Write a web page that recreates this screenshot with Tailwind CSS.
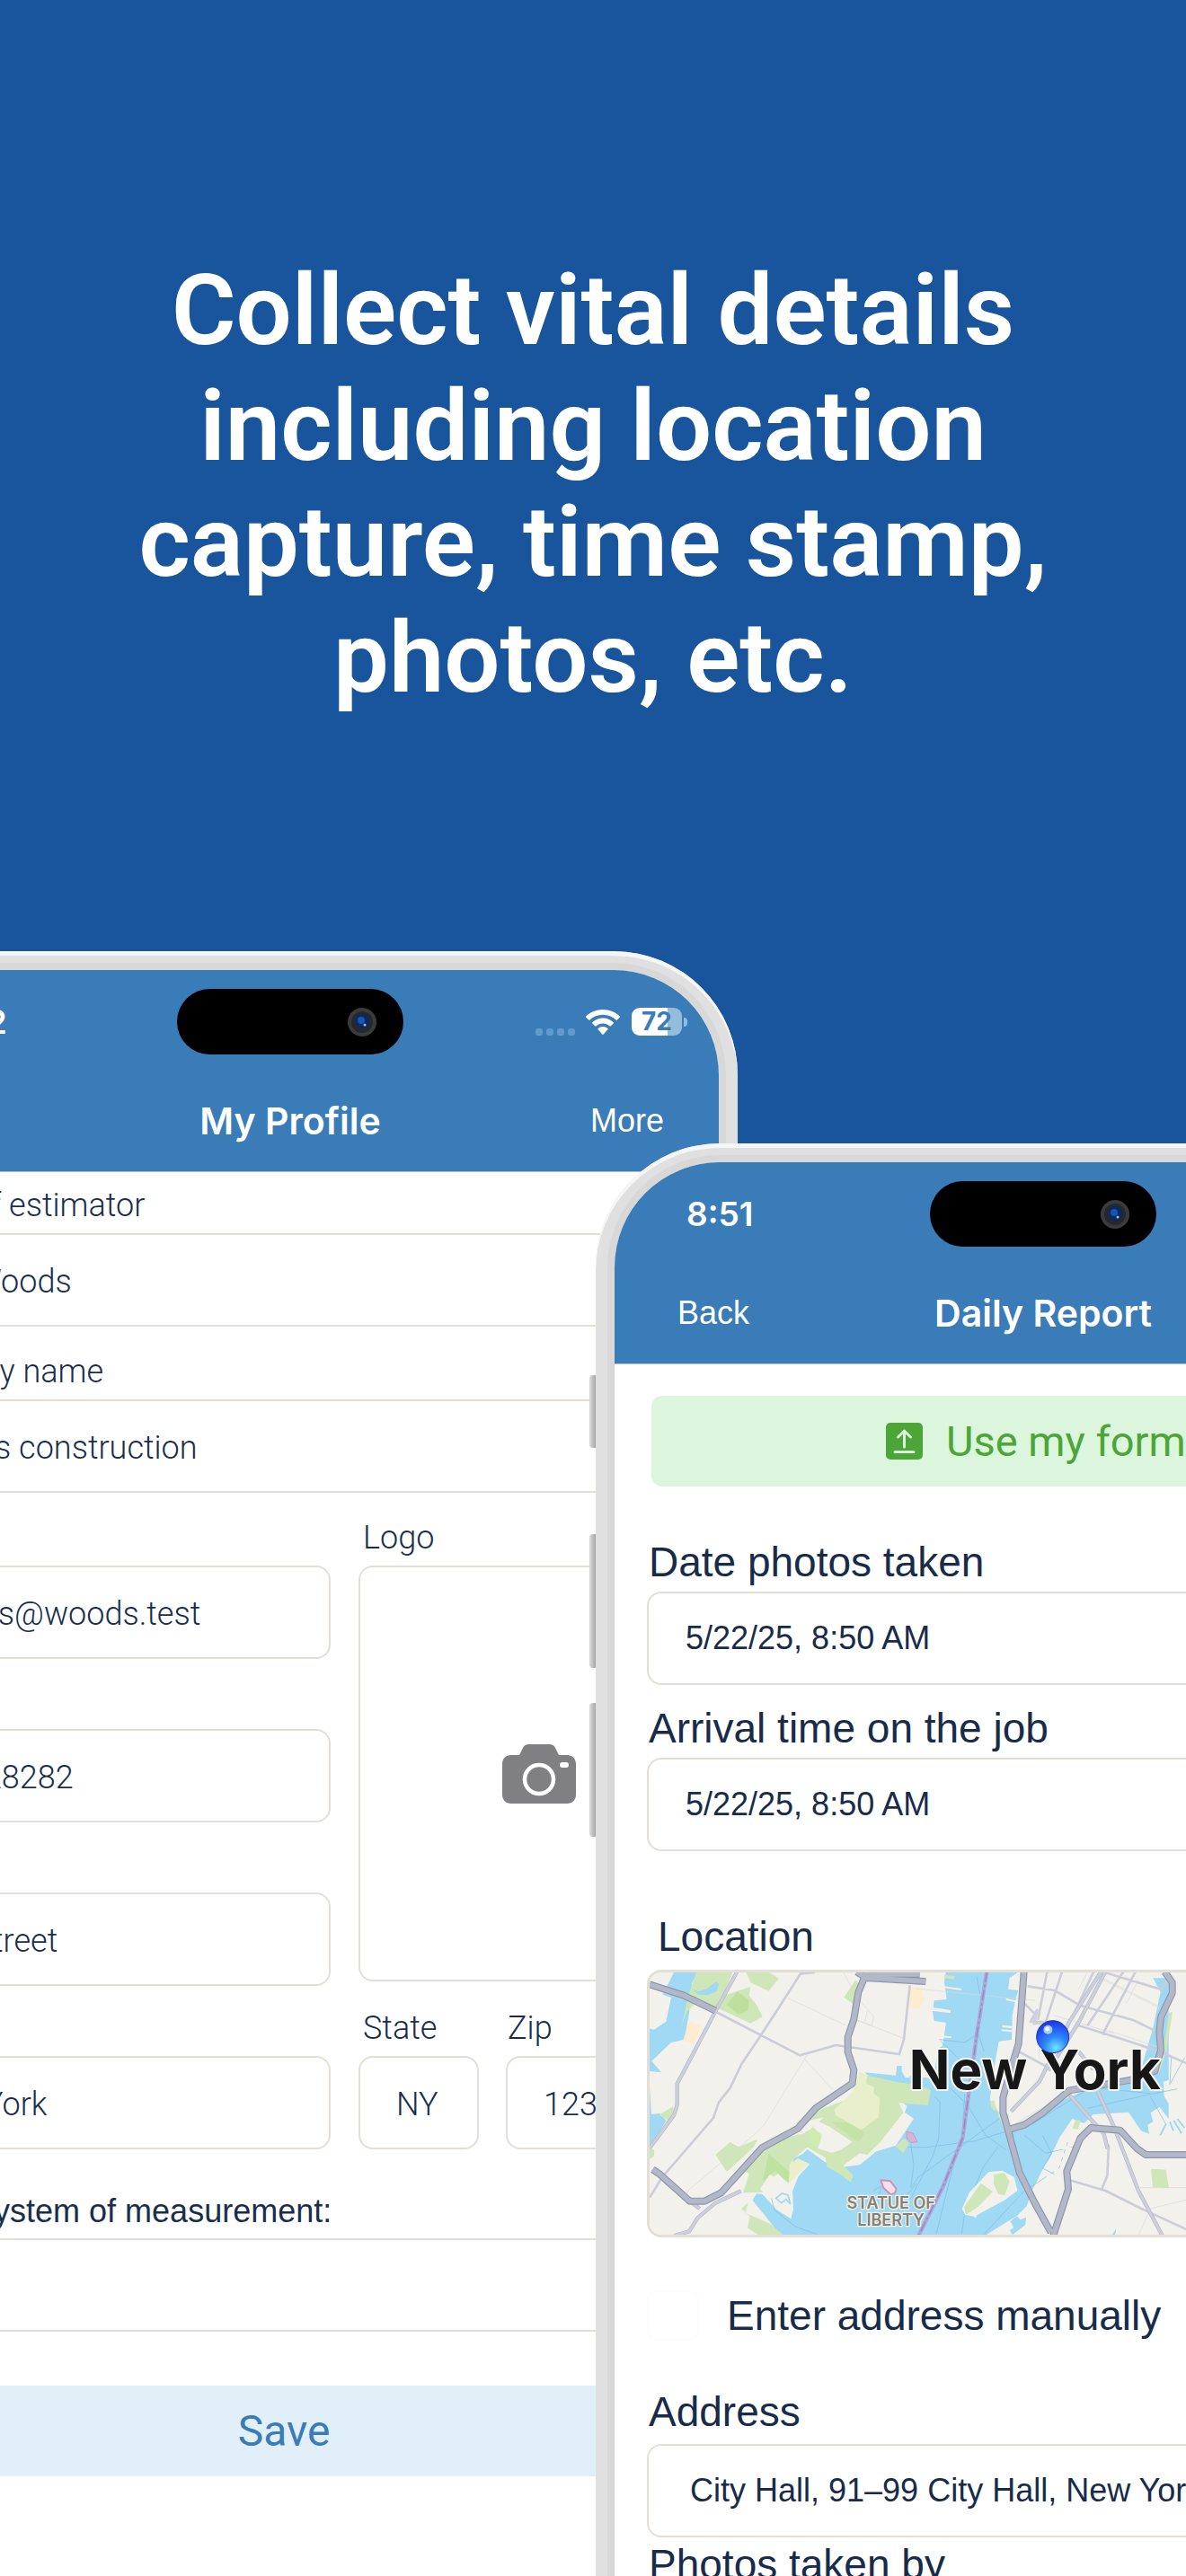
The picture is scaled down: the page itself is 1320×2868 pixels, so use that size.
<!DOCTYPE html>
<html lang="en">
  <head>
    <meta charset="UTF-8" />
    <meta name="viewport" content="width=device-width, initial-scale=1.0" />
    <title>Collect vital details</title>
    <script src="https://cdn.jsdelivr.net/npm/@tailwindcss/browser@4"></script>
  </head>
  <body class="bg-[#19559d]">
    <main class="h-screen overflow-hidden flex flex-col">
      <header class="px-[110px] pt-[281px] pb-[262px]">
        <h1
          class="font-['Roboto',sans-serif] font-semibold text-[110px] leading-[129px] text-center text-white"
        >
          Collect vital details including location capture, time stamp, photos, etc.
        </h1>
      </header>

      <div class="grid grid-cols-[minmax(0,1fr)] items-start">
        <!-- My Profile phone -->
        <section
          class="col-start-1 row-start-1 -ml-[175px] mr-[499px] rounded-[138px] bg-[#e0e0e0] p-[13px] shadow-[inset_0_5px_0_#f6f6f6]"
        >
          <div class="rounded-[125px] bg-[#d8d8d8] p-2">
            <div class="h-[2060px] rounded-[117px] overflow-hidden bg-white">
              <div class="bg-[#3a7cb8] text-white pt-[21px] border-b border-[#b9bfc6]">
                <div class="grid grid-cols-[1fr_252px_1fr] items-center">
                  <span class="pl-20 font-['Inter',sans-serif] font-semibold text-[37px] leading-[44px]">8:52</span>
                  <div class="h-[73px] rounded-full bg-black flex items-center justify-end pr-[30px]">
                    <svg class="w-8 h-8" viewBox="0 0 32 32" aria-hidden="true">
                      <circle cx="16" cy="16" r="16" fill="#3b3b3d" />
                      <circle cx="16" cy="16" r="12" fill="#27282b" />
                      <circle cx="16" cy="15" r="8" fill="#0a2a63" />
                      <circle cx="15" cy="14" r="4" fill="#1556ae" />
                      <circle cx="19" cy="19" r="1.500" fill="#a9bdd6" />
                    </svg>
                  </div>
                  <div class="flex items-center justify-end pr-[35px]">
                    <svg class="w-[44px] h-2 mt-[22px] mr-3" viewBox="0 0 44 8" fill="#629ac9" aria-hidden="true">
                      <rect width="8" height="8" rx="3" />
                      <rect x="12" width="8" height="8" rx="3" />
                      <rect x="24" width="8" height="8" rx="3" />
                      <rect x="36" width="8" height="8" rx="3" />
                    </svg>
                    <svg class="w-[38px] h-[28px] mr-[13px]" viewBox="0 0 38 28" fill="white" aria-hidden="true">
                      <path d="M19 0C11.700 0 5.100 2.800.3 7.400c-.4.400-.4.900 0 1.300l2.900 2.900c.3.300.9.400 1.200 0C8.200 7.900 13.300 5.800 19 5.800s10.800 2.100 14.600 5.800c.4.400.9.300 1.200 0l2.900-2.900c.4-.4.4-.9 0-1.300C32.900 2.800 26.300 0 19 0Z" />
                      <path d="M19 9.600c-4.500 0-8.600 1.700-11.700 4.600-.4.300-.4.900 0 1.300l2.900 2.800c.4.400.8.400 1.200.1 2-1.900 4.700-3 7.600-3s5.600 1.100 7.600 3c.4.300.8.300 1.200-.1l2.900-2.800c.4-.4.4-1 0-1.300-3.100-2.900-7.200-4.600-11.700-4.600Z" />
                      <path d="M19 18.900c-2.100 0-4 .8-5.400 2.100-.4.300-.4.900 0 1.200l4.700 5.300c.4.500 1 .5 1.400 0l4.700-5.300c.4-.3.400-.9 0-1.200-1.400-1.300-3.300-2.100-5.400-2.100Z" />
                    </svg>
                    <span
                      class="w-14 h-[31px] rounded-[9px] bg-linear-to-r from-white from-72% to-[#95bddb] to-72% text-center font-['Inter',sans-serif] font-bold text-[28px] leading-[31px] text-[#3a7cb8]"
                      >72</span
                    >
                    <span class="w-1 h-2.5 ml-[2px] rounded-r-full bg-[#95bddb]"></span>
                  </div>
                </div>
                <div class="mt-[18px] h-[112px] grid grid-cols-[1fr_auto_1fr] items-center">
                  <span></span>
                  <h2 class="font-['Inter',sans-serif] font-semibold text-[41px] leading-[50px]">My Profile</h2>
                  <button type="button" class="justify-self-end pr-[61px] font-['Liberation_Sans',sans-serif] text-[36px] leading-[42px]">
                    More
                  </button>
                </div>
              </div>

              <form class="pl-[14px] pt-4 font-['Roboto',sans-serif] font-light text-[36px] leading-[42px] text-[#1a2e4c]">
                <div class="flex flex-col gap-[29px]">
                  <div class="flex flex-col gap-[10px]">
                    <label for="estimator" class="pl-[5px]">Name of estimator</label>
                    <input id="estimator" type="text" value="Joe Woods" class="h-[104px] px-10 pt-[3px] border-2 border-[#e3dfd4] rounded-2xl" />
                  </div>
                  <div class="flex flex-col gap-[10px]">
                    <label for="company" class="pl-[5px]">Company name</label>
                    <input id="company" type="text" value="Woods construction" class="h-[104px] px-10 pt-[3px] border-2 border-[#e3dfd4] rounded-2xl" />
                  </div>
                  <div class="grid grid-cols-[minmax(0,1fr)_401px] gap-x-[31px] gap-y-[26px]">
                    <div class="flex flex-col gap-[10px]">
                      <label for="email" class="pl-[5px]">Email</label>
                      <input id="email" type="email" value="jwoods@woods.test" class="h-[104px] px-10 pt-[3px] border-2 border-[#e3dfd4] rounded-2xl" />
                    </div>
                    <div class="row-span-3 flex flex-col gap-[10px] pb-[5px]">
                      <span id="logo-label" class="pl-[5px]">Logo</span>
                      <button type="button" aria-labelledby="logo-label" class="flex-1 flex items-center justify-center border-2 border-[#e3dfd4] rounded-2xl">
                        <svg class="w-[82px] h-[66px]" viewBox="0 0 82 66" aria-hidden="true">
                          <path
                            d="M10 12h9l4-8c1.500-3 3.500-4 6.500-4h23c3 0 5 1 6.500 4l4 8h9c6 0 10 4 10 10v34c0 6-4 10-10 10H10C4 66 0 62 0 56V22c0-6 4-10 10-10Z"
                            fill="#808082"
                          />
                          <circle cx="41" cy="39" r="16" fill="none" stroke="white" stroke-width="4.500" />
                          <rect x="64" y="20" width="10" height="6" rx="3" fill="white" />
                        </svg>
                      </button>
                    </div>
                    <div class="flex flex-col gap-[10px]">
                      <label for="phone" class="pl-[5px]">Phone</label>
                      <input id="phone" type="tel" value="282828282" class="h-[104px] px-10 pt-[3px] border-2 border-[#e3dfd4] rounded-2xl" />
                    </div>
                    <div class="flex flex-col gap-[10px]">
                      <label for="street" class="pl-[5px]">Street</label>
                      <input id="street" type="text" value="123 Street" class="h-[104px] px-10 pt-[3px] border-2 border-[#e3dfd4] rounded-2xl" />
                    </div>
                    <div class="flex flex-col gap-[10px]">
                      <label for="city" class="pl-[5px]">City</label>
                      <input id="city" type="text" value="New York" class="h-[104px] px-10 pt-[3px] border-2 border-[#e3dfd4] rounded-2xl" />
                    </div>
                    <div class="grid grid-cols-[134px_minmax(0,1fr)] gap-[30px]">
                      <div class="flex flex-col gap-[10px]">
                        <label for="state" class="pl-[5px]">State</label>
                        <input id="state" type="text" value="NY" class="w-full h-[104px] pl-10 pt-[3px] border-2 border-[#e3dfd4] rounded-2xl" />
                      </div>
                      <div class="flex flex-col gap-[10px]">
                        <label for="zip" class="pl-[2px]">Zip</label>
                        <input id="zip" type="text" value="12345" class="w-full h-[104px] pl-10 pt-[3px] border-2 border-[#e3dfd4] rounded-2xl" />
                      </div>
                    </div>
                  </div>
                </div>
                <div class="mt-12 flex flex-col gap-[9px]">
                  <label for="units" class="pl-[5px] font-['Liberation_Sans',sans-serif] font-normal">Select system of measurement:</label>
                  <select id="units" class="h-[104px] px-10 appearance-none border-2 border-[#e3dfd4] rounded-2xl">
                    <option>US</option>
                    <option>Metric</option>
                  </select>
                </div>
                <div class="-ml-[14px] mr-[14px] mt-[60px]">
                  <button type="submit" class="w-full h-[101px] bg-[#e1eff8] text-[#3a7cb8] font-normal text-[48px]">Save</button>
                </div>
              </form>
            </div>
          </div>
        </section>

        <!-- Daily Report phone -->
        <section
          class="relative col-start-1 row-start-1 mt-[214px] ml-[663px] -mr-[339px] rounded-[138px] bg-[#e0e0e0] p-[13px] shadow-[inset_0_5px_0_#f6f6f6]"
        >
          <span class="absolute -left-[7px] top-[258px] w-[7px] h-[81px] rounded-l-sm bg-linear-to-r from-[#dcdcdc] to-[#a6a6a6]"></span>
          <span class="absolute -left-[7px] top-[435px] w-[7px] h-[149px] rounded-l-sm bg-linear-to-r from-[#dcdcdc] to-[#a6a6a6]"></span>
          <span class="absolute -left-[7px] top-[623px] w-[7px] h-[149px] rounded-l-sm bg-linear-to-r from-[#dcdcdc] to-[#a6a6a6]"></span>
          <div class="rounded-[125px] bg-[#d8d8d8] p-2">
            <div class="h-[2060px] rounded-[117px] overflow-hidden bg-white">
              <div class="bg-[#3a7cb8] text-white pt-[21px] border-b border-[#b9bfc6]">
                <div class="grid grid-cols-[1fr_252px_1fr] items-center">
                  <span class="pl-20 font-['Inter',sans-serif] font-semibold text-[37px] leading-[44px]">8:51</span>
                  <div class="h-[73px] rounded-full bg-black flex items-center justify-end pr-[30px]">
                    <svg class="w-8 h-8" viewBox="0 0 32 32" aria-hidden="true">
                      <circle cx="16" cy="16" r="16" fill="#3b3b3d" />
                      <circle cx="16" cy="16" r="12" fill="#27282b" />
                      <circle cx="16" cy="15" r="8" fill="#0a2a63" />
                      <circle cx="15" cy="14" r="4" fill="#1556ae" />
                      <circle cx="19" cy="19" r="1.500" fill="#a9bdd6" />
                    </svg>
                  </div>
                  <span></span>
                </div>
                <div class="mt-[18px] h-[112px] grid grid-cols-[1fr_auto_1fr] items-center">
                  <button type="button" class="justify-self-start pl-[70px] font-['Liberation_Sans',sans-serif] text-[36px] leading-[42px]">
                    Back
                  </button>
                  <h2 class="font-['Inter',sans-serif] font-semibold text-[41px] leading-[50px]">Daily Report</h2>
                  <span></span>
                </div>
              </div>

              <form class="px-9 pt-[35px] font-['Liberation_Sans',sans-serif] text-[46px] leading-[52px] text-[#182c49]">
                <div class="px-[5px]">
                  <button
                    type="button"
                    class="w-full h-[101px] pl-2 flex items-center justify-center gap-[26px] rounded-xl bg-[#dbf6dd] text-[#4ca637] font-['Roboto',sans-serif] text-[47px]"
                  >
                    <svg class="w-[41px] h-[41px]" viewBox="0 0 41 41" aria-hidden="true">
                      <rect width="41" height="41" rx="5" fill="#4ca637" />
                      <path d="M20.500 27V9.500M13.500 16l7-7 7 7M10 32.500h21" fill="none" stroke="#dbf6dd" stroke-width="3" stroke-linecap="round" stroke-linejoin="round" />
                    </svg>
                    Use my forms
                  </button>
                </div>
                <div class="mt-[58px] flex flex-col gap-[7px]">
                  <label for="taken" class="pl-[2px]">Date photos taken</label>
                  <input id="taken" type="text" value="5/22/25, 8:50 AM" class="h-[104px] px-[41px] text-[36px] border-2 border-[#e3dfd4] rounded-2xl" />
                </div>
                <div class="mt-[22px] flex flex-col gap-[7px]">
                  <label for="arrival" class="pl-[2px]">Arrival time on the job</label>
                  <input id="arrival" type="text" value="5/22/25, 8:50 AM" class="h-[104px] px-[41px] text-[36px] border-2 border-[#e3dfd4] rounded-2xl" />
                </div>
                <h3 class="mt-[69px] pl-3">Location</h3>
                <div class="mt-[11px] h-[298px] border-[3px] border-[#e3dfd4] rounded-2xl overflow-hidden">
                  <svg class="w-full h-full" viewBox="18 16 2628 876" preserveAspectRatio="xMinYMin slice" role="img" aria-label="Map of New York">
                    <rect width="2700" height="910" fill="#f2f1ec" />
                    <!-- water -->
                    <g fill="#9fd9f4">
                      <path d="M100 14h80l-20 36-10 100-15 90-45 10-65 62 32 38-42-4V203l18 4 40-27 17-80-28-10Z" />
                      <path d="M18 398l6 92 28-3 22 24-56 90Z" />
                      <path
                        d="M735 350l105 10 4-32h16v18l12 22h14v-8l20 4 60 6 15-100 15-8 12-78-40-6-5-30 5-38 42-4-8-60 5-32h243l-30 21-5 37 34 4-10 35-10 50-2 80-43 5-15 85-15 110 25 35 20 55 20 10 80-30 80-60 90-40 170-40 25-50 35-120 25-120-25-46h52v340l-18 6 3 48 15 26v50l-30-40-30 20 8 30-18 10 5 30-27-10-42-62-118 7-30 30-40-15-42 62-33 70-17 24-20 40-20 40-20 56-30 30-120 75H470l-20-15-88-110 13-22 20 2 45 50 50 32 8-32-3-60 20-50 37-40-32-10-30 20 10-30 30-15 15-15 55 40 40 22 80-10 55-45 65-20 60-90-30-20 8-22Z"
                      />
                      <path d="M1222 848l22-18 12 12 20-8-4 26-42 32-10-14 14-10Z" />
                      <path d="M1562 893l14-22-4 22Z" />
                    </g>
                    <!-- ferry lines -->
                    <g fill="none" stroke="#82b9e3" stroke-width="2">
                      <path d="M985 240l85 10 45-30 20 60M990 245l60 60 55 20M1110 30l20 100-20 90M1020 400l60 60 60 100 70 50M970 430l18 20-5 120-20 60-73 140M880 600h60l160-20 200-60 190-120 200 20M890 590l10 70-10 75 25-35 180-130 110-80M1060 600l10-180M975 890l80-320M1135 890l130-140 120-80 30-90M860 780l50-60M1180 600l-50 70-60 150-10 70M425 770l10 40 70 55 70 25M1270 560l70 60 90-20 70-90M1480 470l200-45 100-20M1760 300l-5 90 50-90M1690 430l50 90M1330 560l30 60-30 50 40 20M765 745l25-15-5 40" />
                    </g>
                    <!-- piers -->
                    <g fill="#f2f1ec">
                      <path d="M1208 103l42 8v6l-42-8ZM1195 192l40 4v7l-40-4ZM1193 206l35 3v6l-35-3ZM1000 62l58 8v6l-58-8ZM958 132l65 10v10l-65-8ZM975 225l50 5v6l-50-4ZM1222 36h35v36l-40-2Z" />
                    </g>
                    <path d="M1432 545L1403 620L1370 680L1330 760L1316 810" fill="none" stroke="#f2f1ec" stroke-width="42" stroke-dasharray="15 12" />
                    <!-- parks -->
                    <g fill="#cfe6b8">
                      <path d="M175 14h120l-30 80 90-30-5 30 25 30 20 40-40 22-100-46-75-30-40 40-15 50 20-100Z" />
                      <path d="M340 14h75l35 22-35 42-60-28Z" />
                      <path d="M705 42l20 20-20 65-38-28Z" />
                      <path d="M50 492l45-28 8 26-20 22Z" />
                      <path d="M238 625l48-42 30 16 62-26-12 25-90 84Z" />
                      <path d="M720 350l25 10 115 25 46 5 50 18-8 52-98-8 15 33-75 95-45 45-25-5-55 40 33 35-8 22-35-27-45-25-5-30-60-35-25-40 35-20 45-40-100 22 100-52 90-35 20-45Z" />
                      <path d="M375 610l65-30 80-25 30 40-30 25-30 30-5 65-30-35-30 25-20 45-75 2 20-62-12-10Z" />
                      <path d="M840 596l28-26 16 20-20 30Z" />
                      <path d="M325 805l22-20-10 35 30 12 55 25 45 38H385l-40-25 8-38Z" />
                      <path d="M18 600l16 10-2 20-14 10Z" />
                      <path d="M1155 450l12-8 12 38-18-8ZM1178 480l38 10 4 38-26-4ZM1440 508l18 2-10 30-18-2ZM1692 672l50 3 10 62-54-4Z" />
                      <path d="M1752 150l12-2-20 130-24 70-16-6 30-70ZM1002 24l36 4-4 12-32-6Z" />
                    </g>
                    <path d="M720 350l25 12-5 23 28 15-2 20 20 15-3 65-58 42-85-48-5-20 65-64Z" fill="#e9efcb" />
                    <path d="M552 655l-40-18-27 20-2 63 40-40Z" fill="#e9efcb" />
                    <path d="M575 510l45 22 75 50-40 28-30 8-45-14 12-40-30-20Z" fill="#f2f1ec" />
                    <path d="M545 548l20-14 28 26-18 38-22-8 4-24Z" fill="#cdecae" />
                    <path d="M275 125l35-45 40 28-4 36-32 12Z" fill="#bfe09d" />
                    <path d="M415 622l70 60-3 38-46-40-40 34Z" fill="#c0e2a0" />
                    <path d="M625 515l50 2 62 34-22 32Z" fill="#c4e3a8" />
                    <path d="M420 690l75 50-4 88-50-60-40-14-15-14Z" fill="#f2f1ec" />
                    <path d="M160 70l20 10 30-10 28-22 12 6-8 26-32 12-30-2Z" fill="#9fd9f4" />
                    <path d="M440 770l20-16 20 6 8 30-14-16-16 12-10-8Z" fill="none" stroke="#9fd9f4" stroke-width="5" />
                    <path d="M150 182l42 12-25 60-38-10Z" fill="#fdecd0" />
                    <path d="M886 62l40 6 10 40-20 32-30-6Z" fill="#fdecd0" />
                    <path d="M1061 805l25-55 65-68 45-4 40 22 10 45-40 30-95 52-5 10-6-6-29-6Z" fill="#f2f1ec" />
                    <path d="M1068 800l56-80 40 28-50 52-40 25ZM1168 690l34-4 18 28-16 46-22-4-16-36Z" fill="#cfe6b8" />
                    <path d="M1723 560l20-40M1755 515l12 30M1768 510l26 44M1780 505l24 30" stroke="#9fd9f4" stroke-width="6" />
                    <path d="M790 710l32 3 20 26-5 14-14 5-24-22Z" fill="#f1e2ea" stroke="#cf8fb8" stroke-width="6" stroke-linejoin="round" />
                    <path d="M876 548l22 6 14 28-22 2-14-16Z" fill="#d9b3d3" stroke="#d396ba" stroke-width="3" />
                    <!-- thin streets -->
                    <g fill="none" stroke="#d9d9d9" stroke-width="2">
                      <path d="M480 102l196 92M665 14l30 60M720 110l47 55-8 28-50-18 155 60M745 145l-8 35M545 290l-145 236-30 30-220 185-15 24M535 305l95 104M906 70l400 40M1320 180l-2 120M1500 25l230 115M1520 30l200 100M1370 160l200 60M1240 520l190-110M1650 895l40-90 122-30M1654 735h158M1550 210l180 60M1650 40l-40 80M1480 14l-30 60" />
                    </g>
                    <!-- secondary roads -->
                    <g fill="none" stroke="#cbceda" stroke-width="8" stroke-linejoin="round">
                      <path d="M570 16l-48 4-70 110-65 100-62 92-38 80-38 48-18 52L60 700 18 768M240 148l280 145 120-34 212 30 15-50 20-180M1280 62l90 14 85 50 180 50 80 40M1345 14l-30 160M1395 14l-55 170M1440 190l160 50 120 40 92 40M1600 14l-120 180M1640 14l-110 210M1500 14l-60 130M1530 14l200 60 20-40M1270 120l40 40M1250 280l130 70M1420 710l120 35 120 60 152 70M1545 600l6-5-5 100-18 45" />
                    </g>
                    <g fill="none" stroke="#b3b8c8" stroke-width="13" stroke-linejoin="round">
                      <path d="M310 14l-72 132-95 180-33 62v70l-10 34-82 110M70 715l115 90M100 895l50-14 28-45 60-50 85-40M1525 14L1420 180 1320 380 1225 480M1540 14l-90 170-100 160M1450 280l50 60M1420 425l70 80 45 50 12 50M1515 415l55 120 80 210 80 150" />
                    </g>
                    <g fill="none" stroke="#cdd0dc" stroke-width="9" stroke-linejoin="round">
                      <path d="M310 14l-72 132-95 180-33 62v70l-10 34-82 110M70 715l115 90M100 895l50-14 28-45 60-50 85-40M1525 14L1420 180 1320 380 1225 480M1540 14l-90 170-100 160M1450 280l50 60M1420 425l70 80 45 50 12 50M1515 415l55 120 80 210 80 150" />
                      <path d="M1290 180l22-38-10 45 30-5Z" />
                    </g>
                    <!-- highways -->
                    <g fill="none" stroke="#8f96ac" stroke-width="24" stroke-linejoin="round">
                      <path d="M18 56l112 36 108 52 M710 14l30 20 200 12M920 22h-180l-25 60-15 90-20 60v50l20 60-5 45-122 82-60 68-120 65-136 150-55 28h-50l-100-90-24-16" />
                      <path d="M1268 14l-18 240-30 100-22 80v50l20 70 35 130 50 100 55 100M1220 540l50-15 60-40 90-75 90-15 115-20 80-30 20-70-5-60 5-50 38-80V50l-25-36M1366 895l50-155-5-60 45-110 35-35 98 8 55 60 30 22h140" />
                    </g>
                    <g fill="none" stroke="#b2b8c7" stroke-width="17" stroke-linejoin="round">
                      <path d="M18 56l112 36 108 52 M710 14l30 20 200 12M920 22h-180l-25 60-15 90-20 60v50l20 60-5 45-122 82-60 68-120 65-136 150-55 28h-50l-100-90-24-16" />
                      <path d="M1268 14l-18 240-30 100-22 80v50l20 70 35 130 50 100 55 100M1220 540l50-15 60-40 90-75 90-15 115-20 80-30 20-70-5-60 5-50 38-80V50l-25-36M1366 895l50-155-5-60 45-110 35-35 98 8 55 60 30 22h140" />
                    </g>
                    <!-- state line -->
                    <path d="M1144 14l-33 206-48 350-65 160-82 165" fill="none" stroke="#a9a8d6" stroke-width="13" />
                    <path d="M1144 14l-33 206-48 350-65 160-82 165" fill="none" stroke="#a67fc4" stroke-width="4" stroke-dasharray="34 10 8 10" />
                    <g font-family="Inter, sans-serif" paint-order="stroke" stroke-linejoin="round">
                      <text x="884" y="405" font-size="180" font-weight="700" fill="#171717" stroke="#f6f6f3" stroke-width="12">New York</text>
                      <g font-size="54" font-weight="600" fill="#848072" stroke="#f4f3ee" stroke-width="8" text-anchor="middle">
                        <text x="824" y="806">STATUE OF</text>
                        <text x="824" y="861">LIBERTY</text>
                      </g>
                    </g>
                    <defs>
                      <radialGradient id="pin" cx="0.6" cy="0.85" r="0.9">
                        <stop offset="0" stop-color="#6fe6ff" />
                        <stop offset="0.4" stop-color="#2f86f8" />
                        <stop offset="0.75" stop-color="#2350f2" />
                        <stop offset="1" stop-color="#1a2fe0" />
                      </radialGradient>
                    </defs>
                    <circle cx="1364" cy="231" r="54" fill="url(#pin)" stroke="#1731c9" stroke-width="3" />
                    <circle cx="1348" cy="207" r="15" fill="#a9cdfb" />
                    <circle cx="1346" cy="205" r="7" fill="white" />
                  </svg>
                </div>
                <div class="mt-[58px] flex items-center gap-[31px]">
                  <input id="manual" type="checkbox" class="appearance-none w-[58px] h-[58px] border-[3px] border-[#fdfdfd] rounded-xl" />
                  <label for="manual">Enter address manually</label>
                </div>
                <div class="mt-[52px] flex flex-col gap-[10px]">
                  <label for="address" class="pl-[2px]">Address</label>
                  <input id="address" type="text" value="City Hall, 91–99 City Hall, New York, NY" class="h-[104px] pl-[46px] text-[36px] border-2 border-[#e3dfd4] rounded-2xl" />
                </div>
                <div class="mt-1 flex flex-col gap-[7px]">
                  <label for="by" class="pl-[2px]">Photos taken by</label>
                  <input id="by" type="text" class="h-[104px] px-[41px] text-[36px] border-2 border-[#e3dfd4] rounded-2xl" />
                </div>
              </form>
            </div>
          </div>
        </section>
      </div>
    </main>
  </body>
</html>
